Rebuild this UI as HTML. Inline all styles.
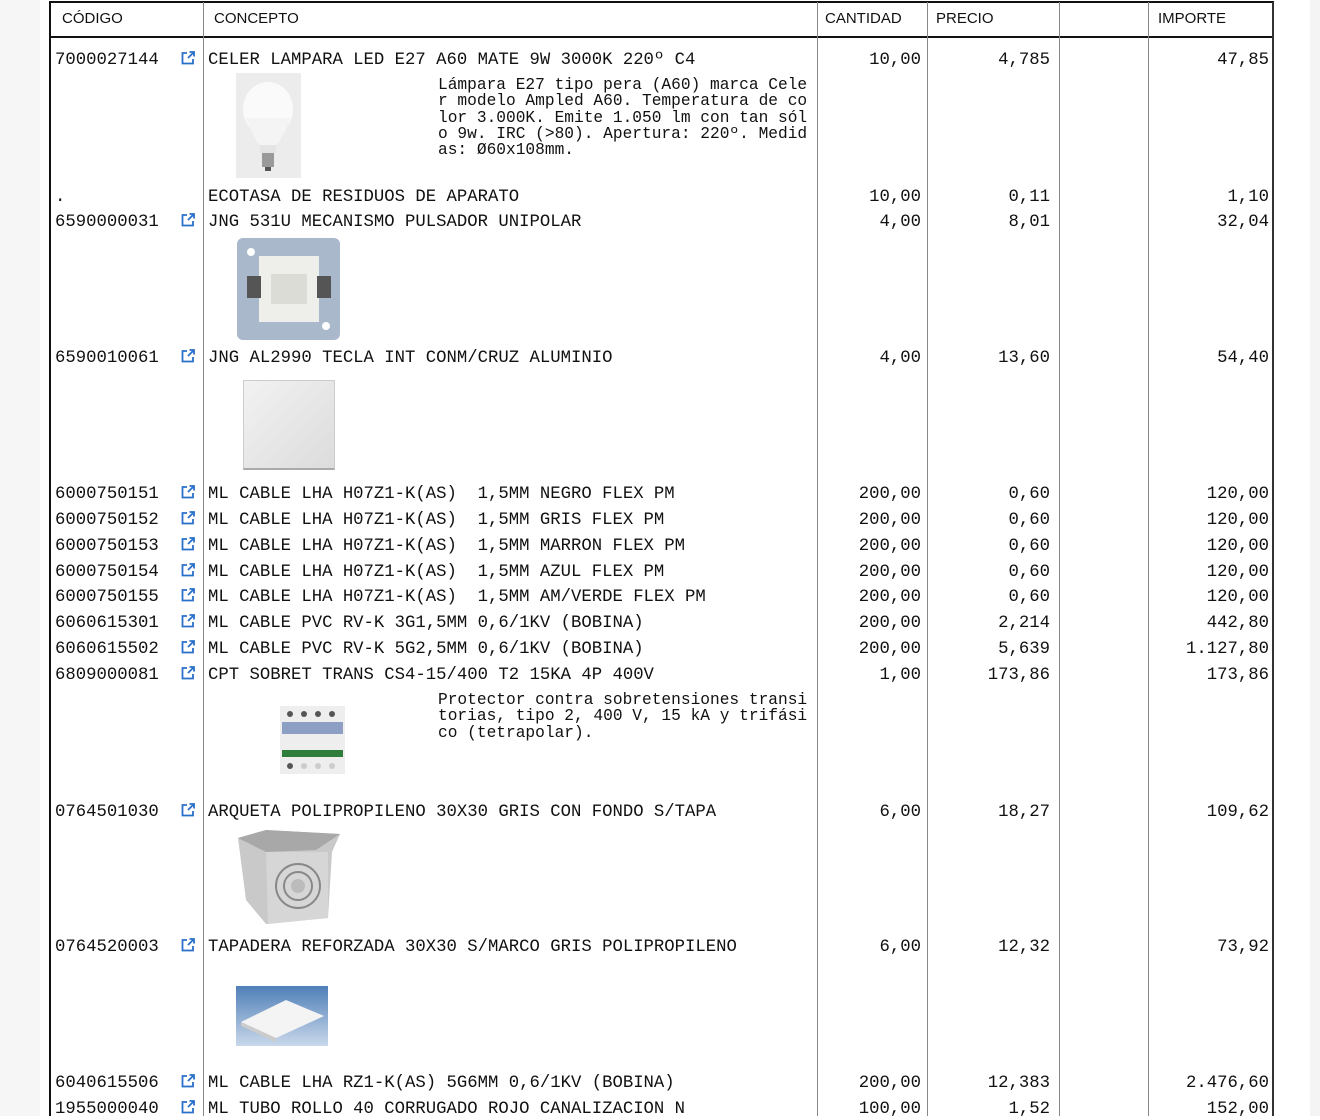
<!DOCTYPE html>
<html><head><meta charset="utf-8"><style>
*{margin:0;padding:0;box-sizing:border-box}
body{width:1320px;height:1116px;background:#fff;position:relative;overflow:hidden;font-family:"Liberation Mono","Courier New",monospace;color:#111}
.sl{position:absolute;top:0;left:0;width:40px;height:1116px;background:#f6f6f6}
.sr{position:absolute;top:0;left:1310px;width:10px;height:1116px;background:#f4f4f4}
.v{position:absolute;top:2px;height:1114px;width:1px;background:#888}
.h{position:absolute;left:49px;width:1225px;height:2px;background:#111}
.hd{position:absolute;top:10px;font-family:"Liberation Sans",Arial,sans-serif;font-size:15px;color:#111}
.r{position:absolute;font-size:17.3px;line-height:20px;white-space:pre;margin-top:3px}
.c{left:55px}.t{left:208px}
.q{right:399px;text-align:right}.p{right:270px;text-align:right}.i{right:51px;text-align:right}
.ic{position:absolute;left:181px;width:14px;height:14px;margin-top:2px}
.d{position:absolute;left:438px;font-size:16.2px;line-height:16.3px;white-space:pre;margin-top:2px}
.img{position:absolute}
</style></head><body>
<div class="sl"></div><div class="sr"></div>
<div class="h" style="top:1px"></div>
<div class="h" style="top:36px"></div>
<div class="v" style="left:49px;width:2px;background:#111"></div>
<div class="v" style="left:203px"></div>
<div class="v" style="left:817px"></div>
<div class="v" style="left:927px"></div>
<div class="v" style="left:1059px"></div>
<div class="v" style="left:1148px"></div>
<div class="v" style="left:1272px;width:2px;background:#333"></div>
<div class="hd" style="left:62px">CÓDIGO</div>
<div class="hd" style="left:214px">CONCEPTO</div>
<div class="hd" style="left:825px">CANTIDAD</div>
<div class="hd" style="left:936px">PRECIO</div>
<div class="hd" style="left:1158px">IMPORTE</div>

<svg width="0" height="0" style="position:absolute"><defs><g id="lk" fill="none" stroke="#2a6fc9" stroke-width="1.8"><path d="M6 2H1.5v10.5H12V8"/><path d="M7 7l5.5-5.5M8.5 1h4.5v4.5"/></g></defs></svg>

<div class="r c" style="top:48px">7000027144</div><svg class="ic" style="top:49px"><use href="#lk"/></svg>
<div class="r t" style="top:48px">CELER LAMPARA LED E27 A60 MATE 9W 3000K 220º C4</div>
<div class="r q" style="top:48px">10,00</div><div class="r p" style="top:48px">4,785</div><div class="r i" style="top:48px">47,85</div>
<div class="d" style="top:75px">Lámpara E27 tipo pera (A60) marca Cele
r modelo Ampled A60. Temperatura de co
lor 3.000K. Emite 1.050 lm con tan sól
o 9w. IRC (&gt;80). Apertura: 220º. Medid
as: Ø60x108mm.</div>
<svg class="img" style="left:236px;top:73px" width="65" height="105"><rect width="65" height="105" fill="#ececec"/><ellipse cx="32" cy="36" rx="25" ry="27" fill="#fafafa"/><path d="M10 45 Q20 70 24 72 L40 72 Q44 70 55 45Z" fill="#f4f4f4"/><rect x="24" y="72" width="16" height="8" fill="#e4e4e4"/><rect x="26" y="80" width="12" height="14" fill="#9a9a9a"/><rect x="29" y="94" width="6" height="4" fill="#555"/></svg>

<div class="r c" style="top:185px">.</div>
<div class="r t" style="top:185px">ECOTASA DE RESIDUOS DE APARATO</div>
<div class="r q" style="top:185px">10,00</div><div class="r p" style="top:185px">0,11</div><div class="r i" style="top:185px">1,10</div>

<div class="r c" style="top:210px">6590000031</div><svg class="ic" style="top:211px"><use href="#lk"/></svg>
<div class="r t" style="top:210px">JNG 531U MECANISMO PULSADOR UNIPOLAR</div>
<div class="r q" style="top:210px">4,00</div><div class="r p" style="top:210px">8,01</div><div class="r i" style="top:210px">32,04</div>
<svg class="img" style="left:237px;top:238px" width="103" height="102"><rect width="103" height="102" rx="6" fill="#a9b8cb"/><rect x="22" y="18" width="60" height="66" fill="#eeeeea"/><rect x="34" y="36" width="36" height="30" fill="#dcdcd6"/><rect x="10" y="38" width="14" height="22" fill="#555"/><rect x="80" y="38" width="14" height="22" fill="#555"/><circle cx="14" cy="14" r="4" fill="#fff"/><circle cx="89" cy="88" r="4" fill="#fff"/></svg>

<div class="r c" style="top:346px">6590010061</div><svg class="ic" style="top:347px"><use href="#lk"/></svg>
<div class="r t" style="top:346px">JNG AL2990 TECLA INT CONM/CRUZ ALUMINIO</div>
<div class="r q" style="top:346px">4,00</div><div class="r p" style="top:346px">13,60</div><div class="r i" style="top:346px">54,40</div>
<div class="img" style="left:243px;top:380px;width:92px;height:90px;background:linear-gradient(135deg,#f2f2f2,#dcdcdc);border:1px solid #ccc;border-bottom:2px solid #aaa"></div>

<div class="r c" style="top:482px">6000750151</div><svg class="ic" style="top:483px"><use href="#lk"/></svg>
<div class="r t" style="top:482px">ML CABLE LHA H07Z1-K(AS)  1,5MM NEGRO FLEX PM</div>
<div class="r q" style="top:482px">200,00</div><div class="r p" style="top:482px">0,60</div><div class="r i" style="top:482px">120,00</div>

<div class="r c" style="top:508px">6000750152</div><svg class="ic" style="top:509px"><use href="#lk"/></svg>
<div class="r t" style="top:508px">ML CABLE LHA H07Z1-K(AS)  1,5MM GRIS FLEX PM</div>
<div class="r q" style="top:508px">200,00</div><div class="r p" style="top:508px">0,60</div><div class="r i" style="top:508px">120,00</div>

<div class="r c" style="top:534px">6000750153</div><svg class="ic" style="top:535px"><use href="#lk"/></svg>
<div class="r t" style="top:534px">ML CABLE LHA H07Z1-K(AS)  1,5MM MARRON FLEX PM</div>
<div class="r q" style="top:534px">200,00</div><div class="r p" style="top:534px">0,60</div><div class="r i" style="top:534px">120,00</div>

<div class="r c" style="top:560px">6000750154</div><svg class="ic" style="top:561px"><use href="#lk"/></svg>
<div class="r t" style="top:560px">ML CABLE LHA H07Z1-K(AS)  1,5MM AZUL FLEX PM</div>
<div class="r q" style="top:560px">200,00</div><div class="r p" style="top:560px">0,60</div><div class="r i" style="top:560px">120,00</div>

<div class="r c" style="top:585px">6000750155</div><svg class="ic" style="top:586px"><use href="#lk"/></svg>
<div class="r t" style="top:585px">ML CABLE LHA H07Z1-K(AS)  1,5MM AM/VERDE FLEX PM</div>
<div class="r q" style="top:585px">200,00</div><div class="r p" style="top:585px">0,60</div><div class="r i" style="top:585px">120,00</div>

<div class="r c" style="top:611px">6060615301</div><svg class="ic" style="top:612px"><use href="#lk"/></svg>
<div class="r t" style="top:611px">ML CABLE PVC RV-K 3G1,5MM 0,6/1KV (BOBINA)</div>
<div class="r q" style="top:611px">200,00</div><div class="r p" style="top:611px">2,214</div><div class="r i" style="top:611px">442,80</div>

<div class="r c" style="top:637px">6060615502</div><svg class="ic" style="top:638px"><use href="#lk"/></svg>
<div class="r t" style="top:637px">ML CABLE PVC RV-K 5G2,5MM 0,6/1KV (BOBINA)</div>
<div class="r q" style="top:637px">200,00</div><div class="r p" style="top:637px">5,639</div><div class="r i" style="top:637px">1.127,80</div>

<div class="r c" style="top:663px">6809000081</div><svg class="ic" style="top:664px"><use href="#lk"/></svg>
<div class="r t" style="top:663px">CPT SOBRET TRANS CS4-15/400 T2 15KA 4P 400V</div>
<div class="r q" style="top:663px">1,00</div><div class="r p" style="top:663px">173,86</div><div class="r i" style="top:663px">173,86</div>
<div class="d" style="top:690px">Protector contra sobretensiones transi
torias, tipo 2, 400 V, 15 kA y trifási
co (tetrapolar).</div>
<svg class="img" style="left:280px;top:706px" width="65" height="68"><rect width="65" height="68" fill="#eeeeee"/><rect x="2" y="16" width="61" height="12" fill="#8d9fc2"/><rect x="2" y="44" width="61" height="7" fill="#2e7d3a"/><circle cx="10" cy="8" r="3" fill="#555"/><circle cx="24" cy="8" r="3" fill="#555"/><circle cx="38" cy="8" r="3" fill="#555"/><circle cx="52" cy="8" r="3" fill="#555"/><circle cx="10" cy="60" r="3" fill="#555"/><circle cx="24" cy="60" r="3" fill="#ccc"/><circle cx="38" cy="60" r="3" fill="#ccc"/><circle cx="52" cy="60" r="3" fill="#ccc"/></svg>

<div class="r c" style="top:800px">0764501030</div><svg class="ic" style="top:801px"><use href="#lk"/></svg>
<div class="r t" style="top:800px">ARQUETA POLIPROPILENO 30X30 GRIS CON FONDO S/TAPA</div>
<div class="r q" style="top:800px">6,00</div><div class="r p" style="top:800px">18,27</div><div class="r i" style="top:800px">109,62</div>
<svg class="img" style="left:236px;top:830px" width="105" height="95"><path d="M2 8 L30 0 L104 4 L96 22 L92 88 L30 94 L10 70Z" fill="#c9c9c9"/><path d="M2 8 L30 0 L104 4 L80 20 L30 22Z" fill="#a8a8a8"/><path d="M30 22 L92 22 L92 88 L32 94Z" fill="#d6d6d6"/><circle cx="62" cy="56" r="22" fill="none" stroke="#888" stroke-width="2"/><circle cx="62" cy="56" r="14" fill="none" stroke="#888" stroke-width="2"/><circle cx="62" cy="56" r="7" fill="#bbb"/></svg>

<div class="r c" style="top:935px">0764520003</div><svg class="ic" style="top:936px"><use href="#lk"/></svg>
<div class="r t" style="top:935px">TAPADERA REFORZADA 30X30 S/MARCO GRIS POLIPROPILENO</div>
<div class="r q" style="top:935px">6,00</div><div class="r p" style="top:935px">12,32</div><div class="r i" style="top:935px">73,92</div>
<svg class="img" style="left:236px;top:986px" width="92" height="60"><defs><linearGradient id="bg" x1="0" y1="0" x2="0" y2="1"><stop offset="0" stop-color="#4f7fb8"/><stop offset="1" stop-color="#c9d8ea"/></linearGradient></defs><rect width="92" height="60" fill="url(#bg)"/><path d="M5 36 L50 14 L88 30 L40 52Z" fill="#f4f4f4"/><path d="M5 36 L40 52 L40 56 L5 40Z" fill="#ccc"/></svg>

<div class="r c" style="top:1071px">6040615506</div><svg class="ic" style="top:1072px"><use href="#lk"/></svg>
<div class="r t" style="top:1071px">ML CABLE LHA RZ1-K(AS) 5G6MM 0,6/1KV (BOBINA)</div>
<div class="r q" style="top:1071px">200,00</div><div class="r p" style="top:1071px">12,383</div><div class="r i" style="top:1071px">2.476,60</div>

<div class="r c" style="top:1097px">1955000040</div><svg class="ic" style="top:1098px"><use href="#lk"/></svg>
<div class="r t" style="top:1097px">ML TUBO ROLLO 40 CORRUGADO ROJO CANALIZACION N</div>
<div class="r q" style="top:1097px">100,00</div><div class="r p" style="top:1097px">1,52</div><div class="r i" style="top:1097px">152,00</div>
</body></html>
